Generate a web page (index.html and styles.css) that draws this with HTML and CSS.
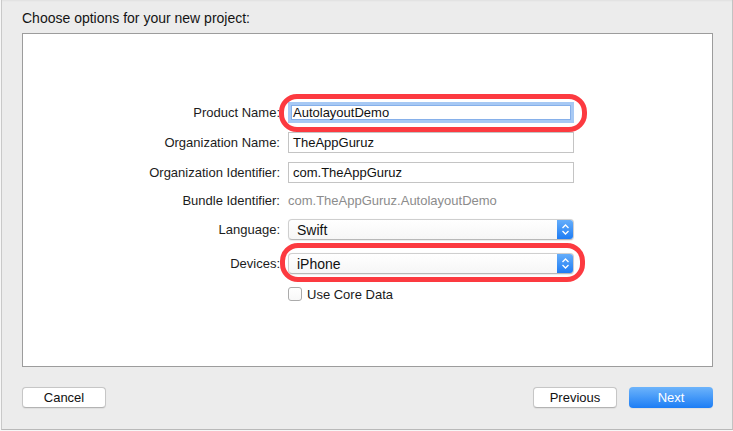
FILE: index.html
```html
<!DOCTYPE html>
<html lang="en">
<head>
    <meta charset="UTF-8">
    <title>Choose options for your new project</title>
    <link rel="stylesheet" href="styles.css">
</head>
<body>
    <div class="sheet">
        <div class="sheet-title">Choose options for your new project:</div>

        <div class="options-box">
            <form class="options">
                <div class="row row-product">
                    <label class="label">Product Name:</label>
                    <div class="ring-wrap">
                        <div class="field focused">AutolayoutDemo</div>
                        <span class="ring ring-product"></span>
                    </div>
                </div>
                <div class="row row-orgname">
                    <label class="label">Organization Name:</label>
                    <div class="field">TheAppGuruz</div>
                </div>
                <div class="row row-orgid">
                    <label class="label">Organization Identifier:</label>
                    <div class="field">com.TheAppGuruz</div>
                </div>
                <div class="row row-bundle">
                    <label class="label">Bundle Identifier:</label>
                    <div class="static">com.TheAppGuruz.AutolayoutDemo</div>
                </div>
                <div class="row row-language">
                    <label class="label">Language:</label>
                    <div class="popup">
                        <span class="popup-value">Swift</span>
                        <span class="stepper">
                            <svg width="17" height="21" viewBox="0 0 17 21"><path d="M5.5 9 L8.5 6 L11.5 9 M5.5 12 L8.5 15 L11.5 12" fill="none" stroke="#fff" stroke-width="1.3"/></svg>
                        </span>
                    </div>
                </div>
                <div class="row row-devices">
                    <label class="label">Devices:</label>
                    <div class="ring-wrap">
                        <div class="popup">
                            <span class="popup-value">iPhone</span>
                            <span class="stepper">
                                <svg width="17" height="21" viewBox="0 0 17 21"><path d="M5.5 9 L8.5 6 L11.5 9 M5.5 12 L8.5 15 L11.5 12" fill="none" stroke="#fff" stroke-width="1.3"/></svg>
                            </span>
                        </div>
                        <span class="ring ring-devices"></span>
                    </div>
                </div>
                <div class="row row-check">
                    <span class="label"></span>
                    <label class="check"><span class="box"></span>Use Core Data</label>
                </div>
            </form>
        </div>

        <div class="footer">
            <button type="button" class="btn">Cancel</button>
            <div class="footer-right">
                <button type="button" class="btn">Previous</button>
                <button type="button" class="btn btn-primary">Next</button>
            </div>
        </div>
    </div>
</body>
</html>
```

FILE: styles.css
```css
html, body {
    margin: 0;
    background: #f7f7f7;
}

body {
    font-family: "Liberation Sans", Arial, sans-serif;
    font-size: 13px;
    color: #1a1a1a;
}

.sheet {
    width: 691px;
    height: 429px;
    margin-left: 1px;
    padding: 0 19px 0 20px;
    background: #ececec;
    border-left: 1px solid #c9c9c9;
    border-right: 1px solid #c2c2c2;
    border-bottom: 1px solid #b9b9b9;
    box-shadow: inset 0 2px 2px -1px rgba(0, 0, 0, 0.05);
}

.sheet-title {
    padding-top: 10px;
    font-size: 14px;
    line-height: 16px;
    color: #141414;
}

.options-box {
    margin-top: 7px;
    height: 332px;
    background: #fff;
    border: 1px solid #9c9c9c;
}

.options {
    display: flex;
    flex-direction: column;
    padding-top: 68px;
}

.row {
    display: flex;
    align-items: center;
    height: 21px;
}

.row-orgname, .row-orgid { margin-top: 9px; }
.row-bundle { margin-top: 7px; }
.row-language { margin-top: 8px; }
.row-devices { margin-top: 13px; }
.row-check { margin-top: 12px; height: 16px; }

.label {
    width: 257px;
    margin-right: 8px;
    text-align: right;
    color: #1c1c1c;
}

.field {
    box-sizing: border-box;
    width: 286px;
    height: 21px;
    padding: 0 4px;
    line-height: 19px;
    border: 1px solid #c4c4c4;
    background: #fff;
    color: #111;
}

.field.focused {
    border: 3px solid #a7c9f4;
    padding: 0 2px;
    line-height: 15px;
    box-shadow: inset 0 0 0 1px #86b0ea;
}

.static {
    color: #8c8c8c;
}

.ring-wrap {
    position: relative;
}

.ring {
    position: absolute;
    border: 5px solid #fc3a40;
    border-radius: 18px;
    pointer-events: none;
}

.ring-product {
    left: -9px;
    right: -13px;
    top: -8px;
    bottom: -9px;
}

.ring-devices {
    left: -8px;
    right: -11px;
    top: -10px;
    bottom: -8px;
}

.popup {
    box-sizing: border-box;
    display: flex;
    align-items: center;
    width: 286px;
    height: 21px;
    border: 1px solid #cfcfcf;
    border-bottom-color: #b8b8b8;
    border-radius: 4px;
    background: linear-gradient(#ffffff, #f6f6f6);
    box-shadow: 0 0.5px 1px rgba(0, 0, 0, 0.08);
    overflow: hidden;
}

.popup-value {
    flex: 1;
    padding-left: 8px;
    font-size: 14px;
    color: #111;
}

.stepper {
    display: flex;
    width: 17px;
    height: 21px;
    margin-right: -1px;
    background: linear-gradient(#68b0fb, #1b7af4);
}

.check {
    display: flex;
    align-items: center;
    gap: 5px;
    color: #1a1a1a;
}

.check .box {
    box-sizing: border-box;
    width: 14px;
    height: 14px;
    border: 1px solid #ababab;
    border-radius: 3px;
    background: linear-gradient(#fff, #f8f8f8);
}

.footer {
    display: flex;
    justify-content: space-between;
    margin-top: 20px;
}

.footer-right {
    display: flex;
    gap: 12px;
}

.btn {
    box-sizing: border-box;
    width: 84px;
    height: 21px;
    padding: 0;
    font-family: "Liberation Sans", Arial, sans-serif;
    font-size: 13px;
    color: #111;
    background: #fff;
    border: 1px solid #c6c6c6;
    border-bottom-color: #b3b3b3;
    border-radius: 4px;
    box-shadow: 0 0.5px 1px rgba(0, 0, 0, 0.06);
}

.btn-primary {
    color: #fff;
    border: none;
    background: linear-gradient(#6db4fb, #1c7df5);
}
```
